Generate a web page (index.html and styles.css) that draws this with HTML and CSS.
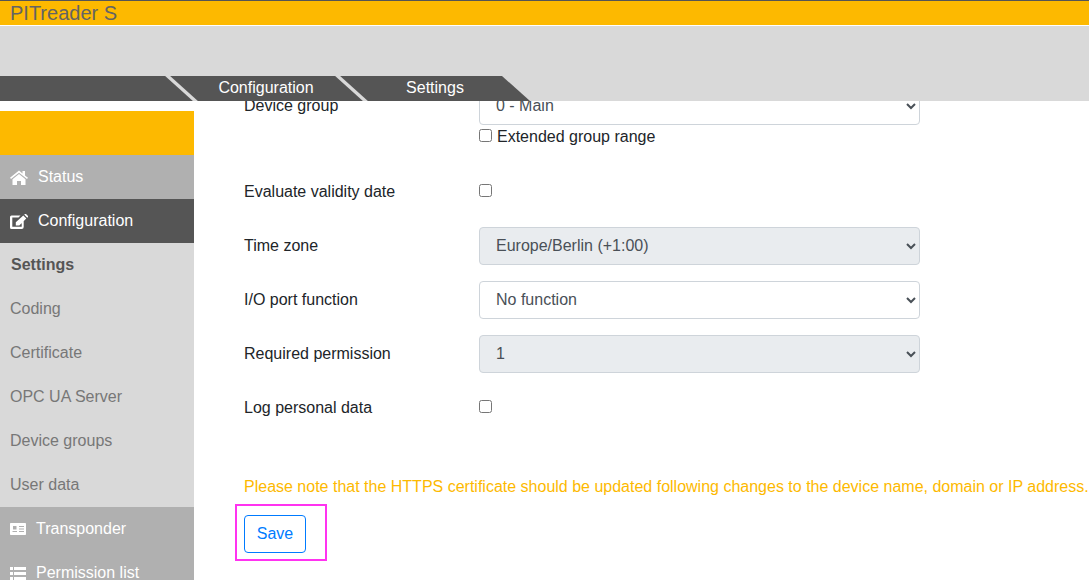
FILE: index.html
```html
<!DOCTYPE html>
<html lang="en">
<head>
<meta charset="utf-8">
<title>PITreader S</title>
<link rel="stylesheet" href="styles.css">
</head>
<body>
<div class="app">
  <header class="header">
    <div class="title-bar">PITreader S</div>
    <div class="header-space"></div>
    <nav class="breadcrumb-row">
      <div class="breadcrumb">
        <span class="crumb">Configuration</span>
        <span class="crumb">Settings</span>
      </div>
    </nav>
  </header>
  <div class="body">
    <aside class="sidebar">
      <div class="logo-block"></div>
      <a class="nav-main"><svg class="icon" viewBox="0 0 18 15"><path d="M9 .6 0 7.800l1 1.200L9 2.700 17 9l1-1.200-3-2.400V1h-2.500v2.400zM2.500 9.200V15H7v-4h4v4h4.500V9.200L9 4z"/></svg>Status</a>
      <a class="nav-main is-active"><svg class="icon" viewBox="0 0 18 15"><path d="M1.500 1.500H10.500L8.500 3.500H2.300v9.200h9.400V8.500l2-2V13a2 2 0 0 1-2 2H1.500A1.500 1.500 0 0 1 0 13.500V3a1.500 1.500 0 0 1 1.500-1.500zM13.300 1.500l3 3-7 7H5.800V8.200zM14.200.6l.8-.6h1l2 2v1l-.7.8z"/></svg>Configuration</a>
      <a class="nav-sub is-current">Settings</a>
      <a class="nav-sub">Coding</a>
      <a class="nav-sub">Certificate</a>
      <a class="nav-sub">OPC UA Server</a>
      <a class="nav-sub">Device groups</a>
      <a class="nav-sub">User data</a>
      <a class="nav-main"><svg class="icon icon-card" viewBox="0 0 16 12"><path fill-rule="evenodd" d="M.8 0h14.400a.8.8 0 0 1 .8.800v10.400a.8.800 0 0 1-.8.800H.8a.8.800 0 0 1-.8-.8V.8A.8.800 0 0 1 .8 0zM3 3v3.500h3.500V3zm-.5 5v1h4.500V8zM9 3v1h5V3zm0 2.500v1h5v-1zM9 8v1h5V8z"/></svg>Transponder</a>
      <a class="nav-main"><svg class="icon icon-list" viewBox="0 0 16 13"><path d="M0 0h3v3H0zM4 0h12v3H4zM0 5h3v3H0zM4 5h12v3H4zM0 10h3v3H0zM4 10h12v3H4z"/></svg>Permission list</a>
    </aside>
    <main class="main">
      <form class="form">
        <div class="row row-top">
          <label class="row-label">Device group</label>
          <div class="row-field">
            <select class="control"><option>0 - Main</option></select>
            <label class="check-line"><input type="checkbox">Extended group range</label>
          </div>
        </div>
        <div class="row">
          <label class="row-label">Evaluate validity date</label>
          <div class="row-field"><input type="checkbox"></div>
        </div>
        <div class="row">
          <label class="row-label">Time zone</label>
          <div class="row-field"><select class="control" disabled><option>Europe/Berlin (+1:00)</option></select></div>
        </div>
        <div class="row">
          <label class="row-label">I/O port function</label>
          <div class="row-field"><select class="control"><option>No function</option></select></div>
        </div>
        <div class="row">
          <label class="row-label">Required permission</label>
          <div class="row-field"><select class="control" disabled><option>1</option></select></div>
        </div>
        <div class="row">
          <label class="row-label">Log personal data</label>
          <div class="row-field"><input type="checkbox"></div>
        </div>
        <p class="note">Please note that the HTTPS certificate should be updated following changes to the device name, domain or IP address.</p>
        <div class="save-wrap">
          <button type="button" class="save">Save</button>
          <span class="highlight"></span>
        </div>
      </form>
    </main>
  </div>
</div>
</body>
</html>
```
FILE: styles.css
```css
* { box-sizing: border-box; }
html, body { margin: 0; height: 100%; overflow: hidden; }
body {
  font-family: "Liberation Sans", Arial, sans-serif;
  font-size: 16px;
  line-height: 24px;
  color: #212529;
  background: #fff;
}
.app { display: flex; flex-direction: column; height: 580px; overflow: hidden; }

.header { flex: none; position: relative; z-index: 2; }
.title-bar {
  height: 26px;
  padding-left: 10px;
  background: #fdb900;
  border-top: 1px solid #555;
  border-bottom: 1px solid #fff;
  color: #646464;
  font-size: 20px;
  line-height: 25px;
}
.header-space { height: 50px; background: #d9d9d9; }
.breadcrumb-row { height: 25px; background: #d9d9d9; }
.breadcrumb {
  display: flex;
  width: 530px;
  height: 25px;
  padding-left: 181px;
  background: #555;
  clip-path: polygon(0 0, 502px 0, 530px 100%, 0 100%);
}
.crumb {
  position: relative;
  width: 170px;
  color: #fff;
  line-height: 23px;
  text-align: center;
}
.crumb:last-child { width: 168px; }
.crumb::before {
  content: "";
  position: absolute;
  top: 0;
  bottom: 0;
  left: -2px;
  width: 5px;
  background: #d9d9d9;
  transform: skewX(48deg);
}

.body { flex: 1; display: flex; min-height: 0; }
.sidebar {
  flex: none;
  width: 194px;
  padding-top: 10px;
  overflow: hidden;
}
.logo-block { height: 44px; background: #fdb900; }
.nav-main, .nav-sub {
  display: flex;
  align-items: center;
  height: 44px;
  padding-left: 10px;
}
.nav-main { background: #b0b0b0; color: #fff; }
.nav-main.is-active { background: #555; }
.nav-sub { background: #d9d9d9; color: #777; }
.nav-sub.is-current { color: #555; font-weight: 700; padding-left: 11px; }
.icon { width: 18px; height: 15px; margin-right: 10px; fill: #fff; flex: none; }
.icon-card { width: 16px; height: 12px; }
.icon-list { width: 16px; height: 13px; }

.main { flex: 1; min-width: 0; overflow: hidden; padding-left: 50px; }
.form { margin-top: -14px; width: 860px; }
.row { display: flex; align-items: center; height: 38px; margin-bottom: 16px; }
.row-top { align-items: flex-start; height: 62px; margin-bottom: 24px; }
.row-label { flex: none; width: 235px; line-height: 38px; }
.row-field { flex: none; width: 441px; display: flex; flex-direction: column; align-items: flex-start; }
.control {
  display: block;
  width: 441px;
  height: 38px;
  padding: 5px 12px 7px;
  border: 1px solid #ced4da;
  border-radius: 4px;
  background: #fff;
  color: #495057;
  font: inherit;
}
.control:disabled { background: #e9ecef; opacity: 1; color: #495057; }
input[type="checkbox"] { width: 13px; height: 13px; margin: 0 0 4px; }
.check-line { display: flex; align-items: center; height: 24px; }
.check-line input { margin-right: 5px; }

.note {
  width: 860px;
  margin: 48px 0 16px;
  color: #fdb900;
  white-space: nowrap;
}
.save-wrap { position: relative; width: 62px; height: 38px; }
.save {
  display: block;
  width: 62px;
  height: 38px;
  padding: 0;
  border: 1px solid #007bff;
  border-radius: 4px;
  background: #fff;
  color: #007bff;
  font: inherit;
}
.highlight {
  position: absolute;
  left: -9px;
  top: -11px;
  width: 92px;
  height: 57px;
  border: 2px solid #ff33f0;
  pointer-events: none;
}
```
